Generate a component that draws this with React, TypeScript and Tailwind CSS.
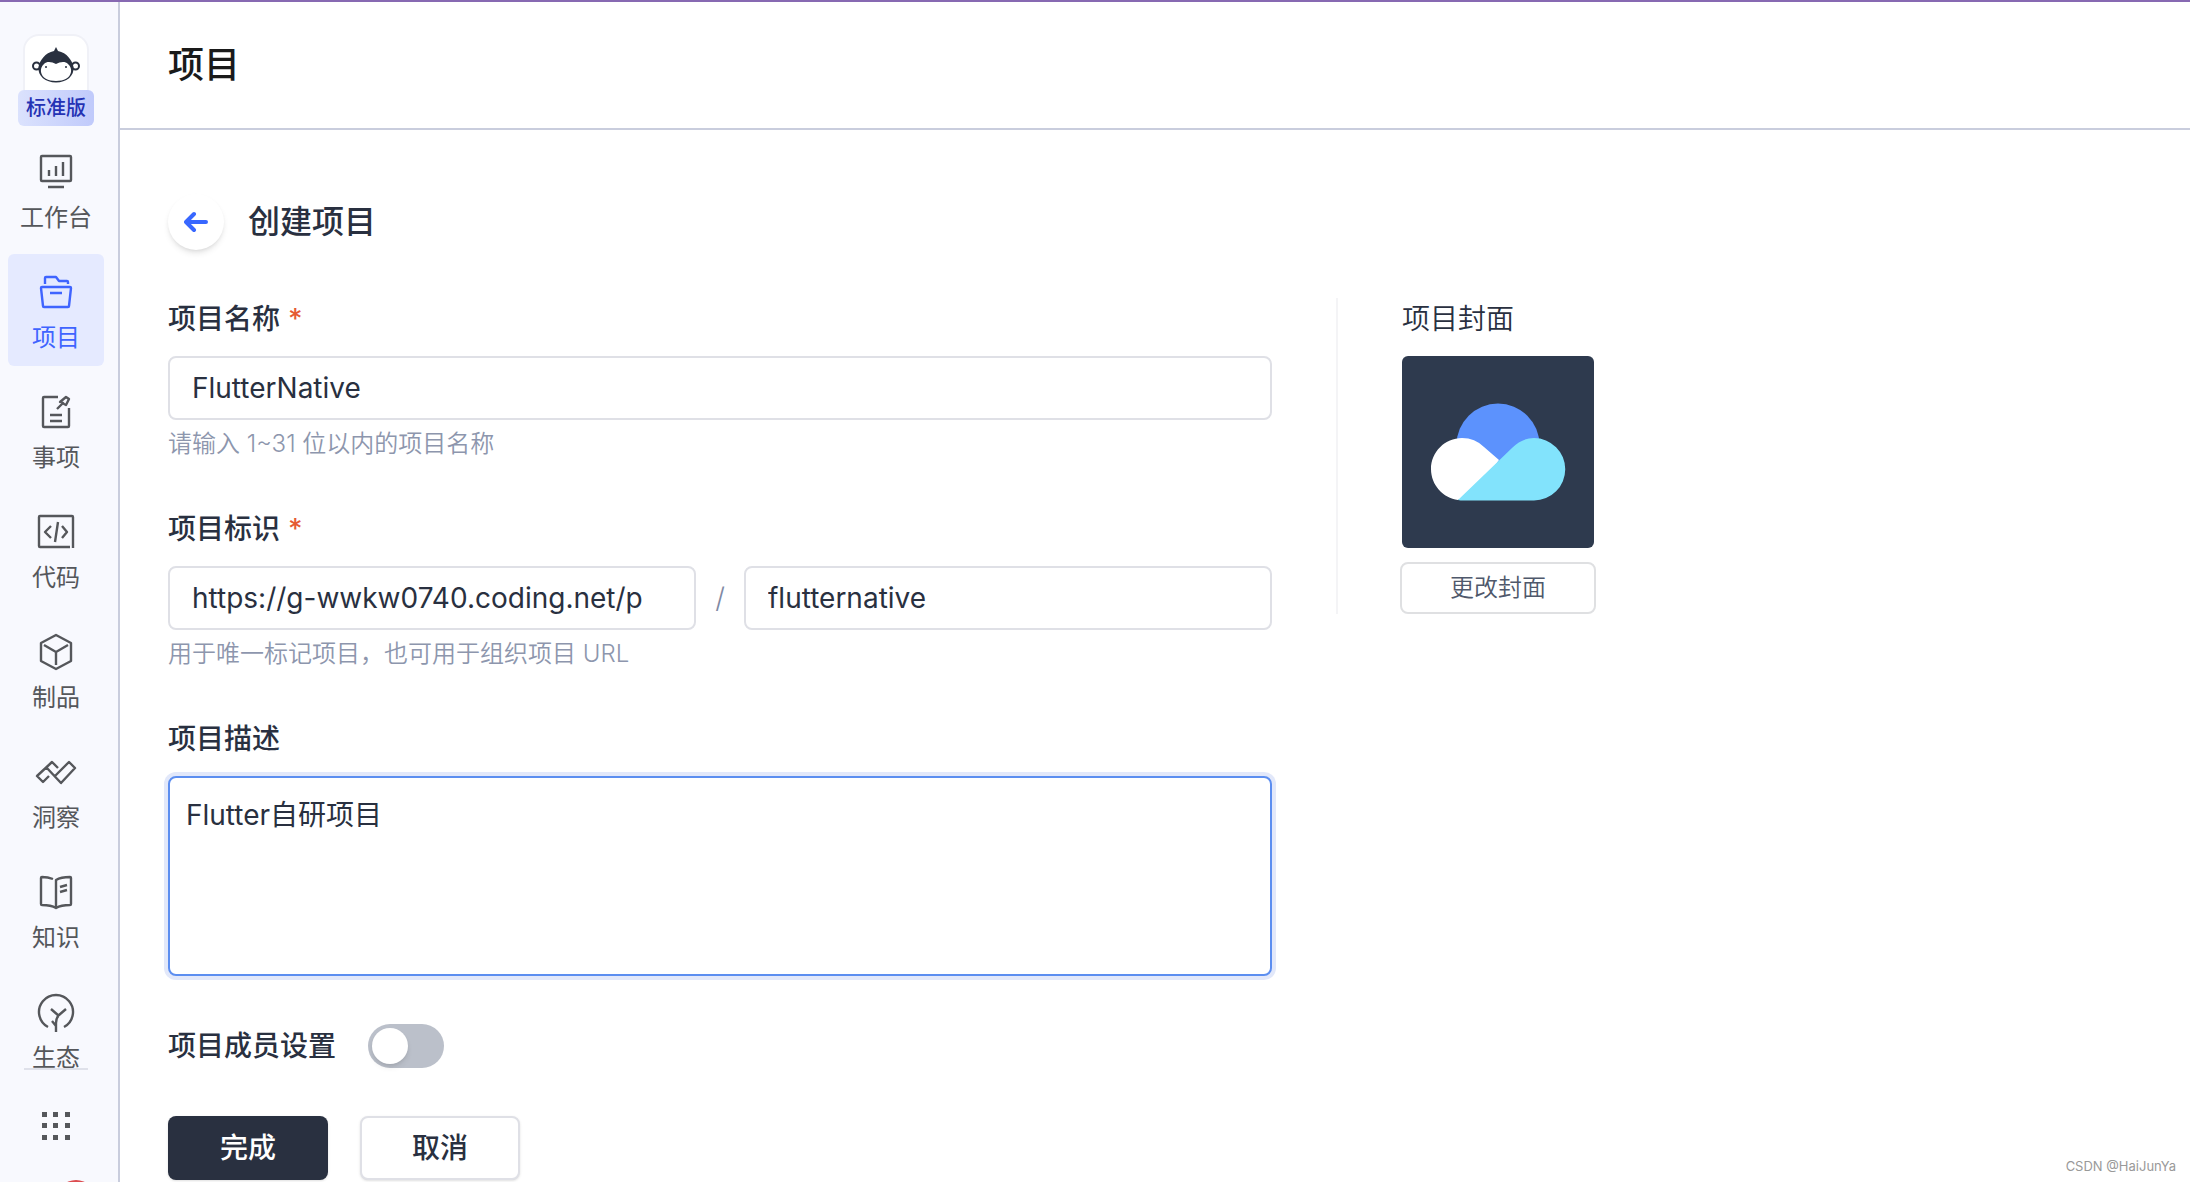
import type { ReactNode } from "react";

const Icon = ({ children }: { children: ReactNode }) => (
    <svg className="h-10 w-10 overflow-visible" viewBox="0 0 40 40" fill="none" stroke="currentColor" strokeWidth="2.4" strokeLinejoin="round">
        {children}
    </svg>
);

const menu = [
    {
        name: "工作台",
        icon: (
            <Icon>
                <rect x="5" y="4" width="30" height="25" rx="1" />
                <path d="M13 18v6M20 14v10M27 10v14M12 35h16" />
            </Icon>
        ),
    },
    {
        name: "项目",
        active: true,
        icon: (
            <Icon>
                <path d="M9 12V6q0-1 1-1h10l3 4h8q1 0 1 1v2M6 15h28q1 0 1 1l-2 18q0 1-1 1H8q-1 0-1-1L5 16q0-1 1-1zM14 21h12" />
            </Icon>
        ),
    },
    {
        name: "事项",
        icon: (
            <Icon>
                <path d="M22 5H8q-1 0-1 1v28q0 1 1 1h24q1 0 1-1V16M14 23h12M14 29h12M21 17l6-6" />
                <path d="M24 10l6-5 3 2-3 6-2-1-3-3z" />
            </Icon>
        ),
    },
    {
        name: "代码",
        icon: (
            <Icon>
                <path d="M34 35H4q-1 0-1-1V5q0-1 1-1h32q1 0 1 1v31M15 14l-6 6 6 6M26 14l5 6-5 6M22 10l-3 20" />
            </Icon>
        ),
    },
    {
        name: "制品",
        icon: (
            <Icon>
                <path d="M20 3l15 8v18l-15 8-15-8V11zM8 13l12 7 12-7M20 20v13" />
            </Icon>
        ),
    },
    {
        name: "洞察",
        icon: (
            <Icon>
                <path d="M13 24l-6 6-6-6L16 10l6 6M10 15l15 16 14-15-6-6-14 14" />
            </Icon>
        ),
    },
    {
        name: "知识",
        icon: (
            <Icon>
                <path d="M17 7q-5-2-11-2-1 0-1 1v26q0 1 1 1 9 0 14 3 5-3 14-3 1 0 1-1V6q0-1-1-1-9 0-14 3v28" />
                <path d="M24 15l7-2M24 20l7-2" />
            </Icon>
        ),
    },
    {
        name: "生态",
        icon: (
            <Icon>
                <path d="M12 35A17 17 0 1 1 28 35" />
                <path d="M20 40V31q0-5 3-8l7-6M23 24l-8-7M20 34l-4-5" />
            </Icon>
        ),
    },
];

function Logo() {
    return (
        <svg className="h-9 w-12" viewBox="0 0 48 36">
            <circle cx="4.500" cy="19" r="3.500" fill="#fff" stroke="#29303f" strokeWidth="2" />
            <circle cx="43.500" cy="19" r="3.500" fill="#fff" stroke="#29303f" strokeWidth="2" />
            <path d="M24 0l2 4c9 2 14 9 15.500 16 1 9-7 15.500-17.500 15.500S5.500 29 6.500 20C8 13 13 6 22 4z" fill="#29303f" />
            <path d="M24 17c4-2 9-3 12 0 2.500 2 3.500 5 3 8-1 6-7 9-15 9s-14-3-15-9c-.5-3 .5-6 3-8 3-3 8-2 12 0z" fill="#fff" />
            <circle cx="14" cy="20" r="1" fill="#29303f" />
            <circle cx="34" cy="20" r="1" fill="#29303f" />
        </svg>
    );
}

function Sidebar() {
    return (
        <aside className="flex w-[120px] shrink-0 flex-col items-center overflow-hidden border-r-2 border-[#c9cddd] bg-[#f8f9fe] pr-1.5 text-[#55575b]">
            <div className="mt-8 flex h-14 w-[66px] shrink-0 items-center justify-center rounded-t-2xl border-2 border-b-0 border-[#f0f1f7] bg-white pt-1">
                <Logo />
            </div>
            <span className="shrink-0 rounded-md bg-linear-to-r from-[#dbe2fd] to-[#c0cafb] px-2 text-[20px] leading-9 font-medium text-[#2432b4]">
                标准版
            </span>
            <nav className="mt-2 flex min-h-0 flex-1 flex-col gap-2">
                {menu.map((item) => (
                    <a
                        key={item.name}
                        href="#"
                        className={`flex h-28 w-24 shrink-0 flex-col items-center gap-4 rounded-md pt-[18px] text-[24px] leading-5 ${
                            item.active ? "bg-[#e5eaff] text-[#3f64ff]" : ""
                        }`}
                    >
                        {item.icon}
                        {item.name}
                    </a>
                ))}
            </nav>
            <div className="h-[2px] w-16 shrink-0 bg-[#dfe1ea]" />
            <button aria-label="更多" className="mt-[42px] shrink-0">
                <svg className="block h-7 w-7" viewBox="0 0 28 28" fill="currentColor">
                    <path d="M0 0h5v5H0zM11 0h5v5h-5zM23 0h5v5h-5zM0 11h5v5H0zM11 11h5v5h-5zM23 11h5v5h-5zM0 23h5v5H0zM11 23h5v5h-5zM23 23h5v5h-5z" />
                </svg>
            </button>
            {/* 未读消息角标 */}
            <div className="mt-10 ml-10 h-[2px] shrink-0 overflow-hidden">
                <div className="h-10 w-10 rounded-full bg-[#dc4c4f]" />
            </div>
        </aside>
    );
}

const label = "block text-[28px] leading-[42px] font-medium";
const input = "h-16 w-full min-w-0 rounded-lg border-2 border-[#dfe0e6] bg-white px-[22px] text-[28px] outline-none";
const hint = "mt-1 text-[24px] leading-10 font-[350] text-[#8d96ad]";

function Required() {
    return <span className="ml-2 text-[#e55a33]">*</span>;
}

function ProjectForm() {
    return (
        <form className="max-w-[1104px] flex-1">
            <label htmlFor="name" className={label}>
                项目名称
                <Required />
            </label>
            <div className="mt-4">
                <input id="name" className={input} defaultValue="FlutterNative" />
            </div>
            <p className={hint}>请输入 1~31 位以内的项目名称</p>

            <label htmlFor="slug" className={`${label} mt-11`}>
                项目标识
                <Required />
            </label>
            <div className="mt-4 flex items-center">
                <input aria-label="项目地址" className={input} defaultValue="https://g-wwkw0740.coding.net/p" />
                <span className="w-12 shrink-0 text-center text-[28px] font-light text-[#8089a3]">/</span>
                <input id="slug" className={input} defaultValue="flutternative" />
            </div>
            <p className={hint}>用于唯一标记项目，也可用于组织项目 URL</p>

            <label htmlFor="desc" className={`${label} mt-11`}>
                项目描述
            </label>
            <textarea
                id="desc"
                className="mt-4 block h-[200px] w-full resize-none rounded-lg border-2 border-[#5c8ef0] bg-white px-4 py-4 text-[28px] leading-[42px] ring-4 ring-[#e2e8fa] outline-none"
                defaultValue="Flutter自研项目"
            />

            <div className="mt-12 flex items-center">
                <label htmlFor="members" className={label}>
                    项目成员设置
                </label>
                <input
                    id="members"
                    type="checkbox"
                    role="switch"
                    className="ml-8 h-11 w-[76px] appearance-none rounded-full bg-[#bbc0ca] p-1 before:block before:h-9 before:w-9 before:rounded-full before:bg-white before:shadow-md checked:bg-[#3f64ff] checked:before:ml-8"
                />
            </div>

            <div className="mt-12 flex gap-8 text-[28px] font-medium">
                <button type="submit" className="h-16 w-40 rounded-lg bg-[#293040] text-white shadow">
                    完成
                </button>
                <button type="button" className="h-16 w-40 rounded-lg border-2 border-[#dfe0e6] bg-white shadow-sm">
                    取消
                </button>
            </div>
        </form>
    );
}

function Cover() {
    return (
        <section className="ml-16 border-l-2 border-[#f4f4f6] pl-[62px]">
            <h3 className="ml-[2px] text-[28px] leading-[42px] font-[350]">项目封面</h3>
            <svg className="mt-4 ml-[2px] h-48 w-48 rounded-md" viewBox="0 0 192 192">
                <rect width="192" height="192" fill="#2e3a4e" />
                <circle cx="96" cy="89" r="41.500" fill="#5c92fd" />
                <path d="M97 104L82 91Q73 82 60 82C43 82 29 96 29 113C29 129 41 142 56 144L75 134z" fill="#fff" />
                <path d="M56 144L110 92Q120 82 132 82A31 31 0 0 1 132 144.500H62Q58 144.500 56 144z" fill="#82e3fc" />
            </svg>
            <button className="mt-[14px] h-[52px] w-[196px] rounded-lg border-2 border-[#dfe0e2] bg-white text-[24px] font-[350] text-[#4f586b]">
                更改封面
            </button>
        </section>
    );
}

function App() {
    return (
        <div className="flex h-screen overflow-hidden border-t-2 border-[#8769b2] bg-white font-['Inter','Noto_Sans_CJK_SC',sans-serif] text-[#293040]">
            <Sidebar />
            <div className="relative flex min-w-0 flex-1 flex-col">
                <header className="flex h-32 shrink-0 items-center border-b-2 border-[#c9cddd] px-12">
                    <h1 className="text-[36px] leading-[54px] font-medium text-[#1a1a1a]">项目</h1>
                </header>
                <main className="flex-1 overflow-hidden px-12 pt-16">
                    <div className="flex items-center gap-6">
                        <button aria-label="返回" className="flex h-14 w-14 items-center justify-center rounded-full bg-white shadow-md">
                            <svg className="h-6 w-6" viewBox="0 0 24 24" fill="none" stroke="#3867ff" strokeWidth="4" strokeLinecap="round" strokeLinejoin="round">
                                <path d="M10 4L2 12l8 8M3 12h19" />
                            </svg>
                        </button>
                        <h2 className="text-[32px] leading-[48px] font-medium">创建项目</h2>
                    </div>
                    <div className="mt-12 flex items-start">
                        <ProjectForm />
                        <Cover />
                    </div>
                </main>
                <span className="absolute right-[14px] bottom-[6px] text-[13px] text-[#999]">CSDN @HaiJunYa</span>
            </div>
        </div>
    );
}

export default App;
